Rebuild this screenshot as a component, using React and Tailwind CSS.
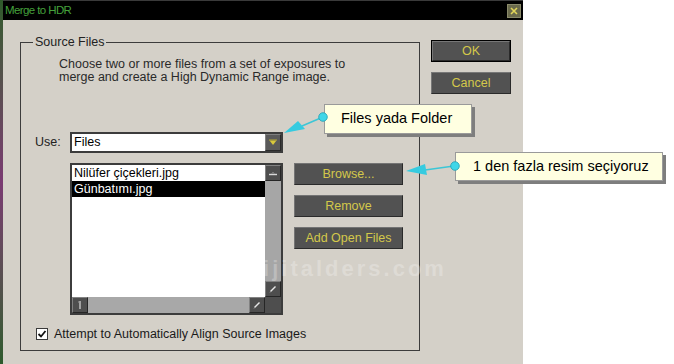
const F = "font-['Liberation_Sans',Arial,sans-serif]";

function DarkButton({ children, def }) {
  return (
    <div className={`${def ? "border border-black" : ""} w-[80px] h-[22px]`}>
      <div className="w-full h-full bg-[#525252] border-t border-l border-[#777] border-r border-b border-r-[#2a2a2a] border-b-[#2a2a2a] flex items-center justify-center text-[12.5px] text-[#d4c84a]">
        {children}
      </div>
    </div>
  );
}

function SideButton({ children }) {
  return (
    <div className="w-[109px] h-[22px] bg-[#525252] border-t border-l border-[#747474] border-r border-b border-r-[#2a2a2a] border-b-[#2a2a2a] flex items-center justify-center text-[12.5px] text-[#d4c84a]">
      {children}
    </div>
  );
}

function SbBtn({ glyph }) {
  return (
    <div className="w-[16px] h-[16px] bg-[#4e4e4e] border-t border-l border-[#828282] border-r border-b border-r-[#262626] border-b-[#262626] flex items-center justify-center">
      {glyph === "up" && (
        <svg width="10" height="8" viewBox="0 0 10 8">
          <path d="M1 5.5 H9" stroke="#d8d8d8" strokeWidth="1.4" />
          <path d="M4 4.5 L5 3.5 L6 4.5" stroke="#bdbdbd" strokeWidth="0.8" fill="none" />
        </svg>
      )}
      {glyph === "slash" && (
        <svg width="10" height="10" viewBox="0 0 10 10">
          <path d="M2.5 7.5 L7.5 2.5" stroke="#e6e6e6" strokeWidth="1.4" />
          <path d="M2 8.5 L3 7.5" stroke="#9a9a9a" strokeWidth="1" />
        </svg>
      )}
      {glyph === "left" && (
        <svg width="10" height="12" viewBox="0 0 10 12">
          <path d="M5 2 V10" stroke="#cfcfcf" strokeWidth="1.3" />
          <path d="M3 3 H5" stroke="#9a9a9a" strokeWidth="1" />
        </svg>
      )}
    </div>
  );
}

export default function App() {
  return (
    <div className={`${F} w-[674px] h-[364px] bg-white relative overflow-hidden flex`}>
      {/* background strip on the far left */}
      <div className="w-[3px] h-full bg-gradient-to-b from-[#2e5a2a] via-[#7a3a72] to-[#2c5a2c]" />

      {/* dialog */}
      <div className="w-[520px] h-full flex flex-col bg-[#d4d0c8]">
        {/* title bar */}
        <div className="h-[20px] bg-black border-t border-[#3a3a3a] flex items-center justify-between pl-[2px] pr-[2px]">
          <span className="text-[11.5px] tracking-[-0.6px] text-[#45a03c] leading-none">
            Merge to HDR
          </span>
          <div className="w-[14px] h-[14px] bg-[#6a6a4c] border border-[#8a8a6a] flex items-center justify-center">
            <svg width="10" height="10" viewBox="0 0 10 10">
              <path d="M2 2 L8 8 M8 2 L2 8" stroke="#e2d65a" strokeWidth="1.6" />
            </svg>
          </div>
        </div>

        {/* body */}
        <div className="flex flex-1">
          <fieldset className="ml-[17px] mt-[15px] w-[400px] h-[316px] border border-[#3c3c3c] flex flex-col">
            <legend className="ml-[12px] px-[2px] text-[12.5px] leading-[14px] text-[#222]">
              Source Files
            </legend>
            <p className="mt-[9px] pl-[38px] text-[12.5px] leading-[13px] text-[#2a2a2a]">
              Choose two or more files from a set of exposures to
              <br />
              merge and create a High Dynamic Range image.
            </p>

            {/* Use row */}
            <div className="mt-[48px] flex items-center">
              <span className="w-[49px] pl-[14px] text-[12.5px] text-[#222]">Use:</span>
              <div className="w-[213px] h-[21px] border-2 border-[#3c3c3c] bg-white flex">
                <span className="flex-1 pl-[2px] text-[12.5px] leading-[17px] text-black">Files</span>
                <div className="w-[16px] h-full bg-[#5a5a5a] border-t border-l border-[#808080] border-r border-b border-r-[#2a2a2a] border-b-[#2a2a2a] flex items-center justify-center">
                  <svg width="10" height="8" viewBox="0 0 10 8">
                    <path d="M1.5 1.5 H8.5 L5 6 Z" fill="#d8c83c" />
                    <path d="M1 1 H9" stroke="#b8aa30" strokeWidth="1" />
                  </svg>
                </div>
              </div>
            </div>

            {/* list + buttons */}
            <div className="mt-[10px] flex">
              <div className="ml-[49px] w-[213px] h-[152px] border-2 border-[#3c3c3c] bg-[#4e4e4e] grid grid-cols-[1fr_16px] grid-rows-[1fr_16px]">
                <div className="bg-white text-[12.5px] leading-[16px]">
                  <div className="pl-[2px] text-black">Nilüfer çiçekleri.jpg</div>
                  <div className="pl-[2px] bg-black text-white">Günbatımı.jpg</div>
                </div>
                <div className="bg-[#a6a6a6] flex flex-col justify-between">
                  <SbBtn glyph="up" />
                  <SbBtn glyph="slash" />
                </div>
                <div className="bg-[#a8a8a8] flex justify-between">
                  <SbBtn glyph="left" />
                  <SbBtn glyph="slash" />
                </div>
                <div className="bg-[#4e4e4e]" />
              </div>
              <div className="ml-[11px] flex flex-col gap-[10px]">
                <SideButton>Browse...</SideButton>
                <SideButton>Remove</SideButton>
                <SideButton>Add Open Files</SideButton>
              </div>
            </div>

            {/* checkbox */}
            <div className="mt-[10px] ml-[15px] flex items-center gap-[6px]">
              <div className="w-[12px] h-[12px] bg-white border border-[#3a3a3a] flex items-center justify-center">
                <svg width="10" height="10" viewBox="0 0 10 10">
                  <path d="M1.5 5 L4 7.5 L8.5 2" stroke="#111" strokeWidth="1.8" fill="none" />
                </svg>
              </div>
              <span className="text-[12.5px] text-[#1a1a1a]">Attempt to Automatically Align Source Images</span>
            </div>
          </fieldset>

          <div className="ml-[11px] mt-[20px] flex flex-col gap-[10px]">
            <DarkButton def>OK</DarkButton>
            <DarkButton>Cancel</DarkButton>
          </div>
        </div>
      </div>

      {/* watermark */}
      <div className="absolute left-[178px] top-[252px] text-[22px] font-bold tracking-[3px] text-white/25 pointer-events-none">
        www.dijitalders.com
      </div>

      {/* callout boxes */}
      <div className="absolute left-[324px] top-[104px] w-[148px] h-[30px] bg-[#ffffe1] border border-[#9a9a9a] shadow-[3px_3px_0_#7e7e7e] flex items-center pl-[16px] text-[14.5px] text-black">
        Files yada Folder
      </div>
      <div className="absolute left-[455px] top-[152px] w-[208px] h-[29px] bg-[#ffffe1] border border-[#9a9a9a] shadow-[3px_3px_0_#7e7e7e] flex items-center pl-[17px] text-[14.5px] text-black">
        1 den fazla resim seçiyoruz
      </div>

      {/* callout arrows */}
      <svg className="absolute left-0 top-0 pointer-events-none" width="674" height="364" viewBox="0 0 674 364">
        <path d="M323 117 L302 126" stroke="#3cc6d6" strokeWidth="1.6" />
        <path d="M284 133 L298 121 L305 129 Z" fill="#36cbe0" />
        <circle cx="323" cy="117" r="4.3" fill="#40d6e8" stroke="#1f9fb2" strokeWidth="0.8" />
        <path d="M454 166 L425 170" stroke="#3cc6d6" strokeWidth="1.6" />
        <path d="M406 171 L425 164 L427 175 Z" fill="#36cbe0" />
        <circle cx="455" cy="166" r="4.3" fill="#40d6e8" stroke="#1f9fb2" strokeWidth="0.8" />
      </svg>
    </div>
  );
}
